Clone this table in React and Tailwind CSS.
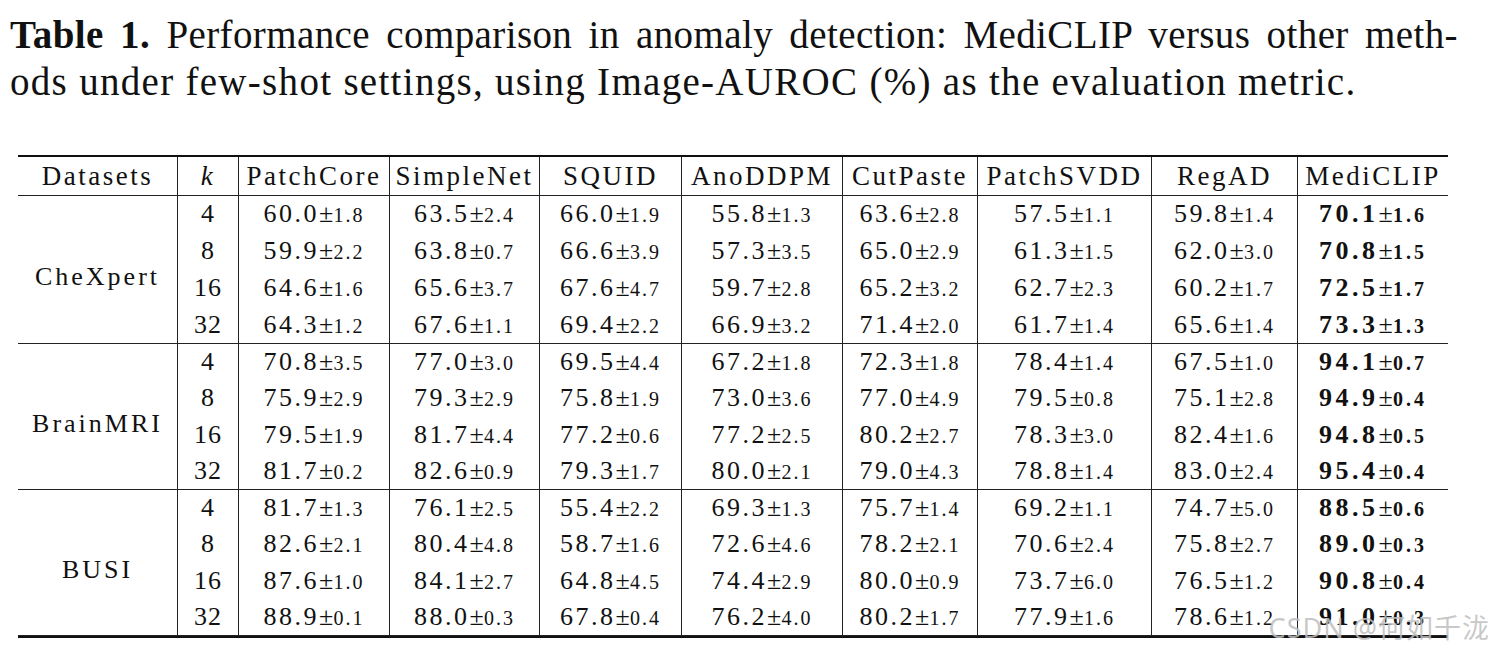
import React from "react";

const methods = ["PatchCore", "SimpleNet", "SQUID", "AnoDDPM", "CutPaste", "PatchSVDD", "RegAD", "MediCLIP"];
const colW = ["w-[151px]", "w-[150px]", "w-[142px]", "w-[161px]", "w-[135px]", "w-[174px]", "w-[146px]", "w-[150px]"];

const groups = [
  {
    name: "CheXpert",
    h: "h-[148px]",
    rows: [
      "60.0±1.8 63.5±2.4 66.0±1.9 55.8±1.3 63.6±2.8 57.5±1.1 59.8±1.4 70.1±1.6",
      "59.9±2.2 63.8±0.7 66.6±3.9 57.3±3.5 65.0±2.9 61.3±1.5 62.0±3.0 70.8±1.5",
      "64.6±1.6 65.6±3.7 67.6±4.7 59.7±2.8 65.2±3.2 62.7±2.3 60.2±1.7 72.5±1.7",
      "64.3±1.2 67.6±1.1 69.4±2.2 66.9±3.2 71.4±2.0 61.7±1.4 65.6±1.4 73.3±1.3",
    ],
  },
  {
    name: "BrainMRI",
    h: "h-[146px]",
    rows: [
      "70.8±3.5 77.0±3.0 69.5±4.4 67.2±1.8 72.3±1.8 78.4±1.4 67.5±1.0 94.1±0.7",
      "75.9±2.9 79.3±2.9 75.8±1.9 73.0±3.6 77.0±4.9 79.5±0.8 75.1±2.8 94.9±0.4",
      "79.5±1.9 81.7±4.4 77.2±0.6 77.2±2.5 80.2±2.7 78.3±3.0 82.4±1.6 94.8±0.5",
      "81.7±0.2 82.6±0.9 79.3±1.7 80.0±2.1 79.0±4.3 78.8±1.4 83.0±2.4 95.4±0.4",
    ],
  },
  {
    name: "BUSI",
    h: "h-[146px]",
    rows: [
      "81.7±1.3 76.1±2.5 55.4±2.2 69.3±1.3 75.7±1.4 69.2±1.1 74.7±5.0 88.5±0.6",
      "82.6±2.1 80.4±4.8 58.7±1.6 72.6±4.6 78.2±2.1 70.6±2.4 75.8±2.7 89.0±0.3",
      "87.6±1.0 84.1±2.7 64.8±4.5 74.4±2.9 80.0±0.9 73.7±6.0 76.5±1.2 90.8±0.4",
      "88.9±0.1 88.0±0.3 67.8±0.4 76.2±4.0 80.2±1.7 77.9±1.6 78.6±1.2 91.0±0.3",
    ],
  },
];

const ks = ["4", "8", "16", "32"];

function Value({ v, bold }) {
  const [main, std] = v.split("±");
  return (
    <span className="whitespace-nowrap text-[26px] leading-none">
      <span className={bold ? "font-bold tracking-[3.5px]" : "tracking-[2.5px]"}>{main}</span>
      <span>±</span>
      <span className={bold ? "text-[20px] font-bold tracking-[3px]" : "text-[20px] tracking-[2px]"}>{std}</span>
    </span>
  );
}

function Group({ g }) {
  const cells = g.rows.map((r) => r.split(" "));
  return (
    <div className={`flex ${g.h} border-b border-[#222]`}>
      <div className="w-[160px] border-r border-[#222] flex items-center justify-center pt-[15px] text-[26px] leading-none tracking-[3px]">
        {g.name}
      </div>
      <div className="w-[61px] border-r border-[#222] flex flex-col">
        {ks.map((k) => (
          <div key={k} className="flex-1 flex items-center justify-center">
            <span className="text-[26px] leading-none tracking-[1px]">{k}</span>
          </div>
        ))}
      </div>
      {methods.map((m, ci) => (
        <div key={m} className={`${colW[ci]} ${ci < 7 ? "border-r border-[#222]" : ""} flex flex-col`}>
          {cells.map((row, ri) => (
            <div key={ri} className="flex-1 flex items-center justify-center">
              <Value v={row[ci]} bold={ci === 7} />
            </div>
          ))}
        </div>
      ))}
    </div>
  );
}

export default function App() {
  return (
    <div className="relative w-[1494px] h-[652px] overflow-hidden bg-white text-[#111] font-['Liberation_Serif',serif]">
      <div className="pl-[10px] pt-[11px] w-[1458px] text-[39px] leading-[47px]">
        <div className="text-justify [text-align-last:justify] tracking-[0.4px]">
          <span className="font-bold">Table 1.</span> Performance comparison in anomaly detection: MediCLIP versus other meth-
        </div>
        <div className="tracking-[1.3px]">ods under few-shot settings, using Image-AUROC (%) as the evaluation metric.</div>
      </div>

      <div className="ml-[18px] mt-[50px] w-[1430px] border-t-2 border-b-2 border-[#111]">
        <div className="flex h-[39px] border-b border-[#222] text-[27px] tracking-[2.5px]">
          <div className="w-[160px] border-r border-[#222] flex items-center justify-center">Datasets</div>
          <div className="w-[61px] border-r border-[#222] flex items-center justify-center italic">k</div>
          {methods.map((m, i) => (
            <div key={m} className={`${colW[i]} ${i < 7 ? "border-r border-[#222]" : ""} flex items-center justify-center`}>
              {m}
            </div>
          ))}
        </div>
        {groups.map((g) => (
          <Group key={g.name} g={g} />
        ))}
      </div>

      <div className="absolute right-[4px] bottom-[11px] text-[27px] leading-none tracking-[1px] text-[rgba(190,190,190,0.85)] font-['Noto_Sans','Noto_Sans_CJK_SC',sans-serif]">
        CSDN @何如千泷
      </div>
    </div>
  );
}
